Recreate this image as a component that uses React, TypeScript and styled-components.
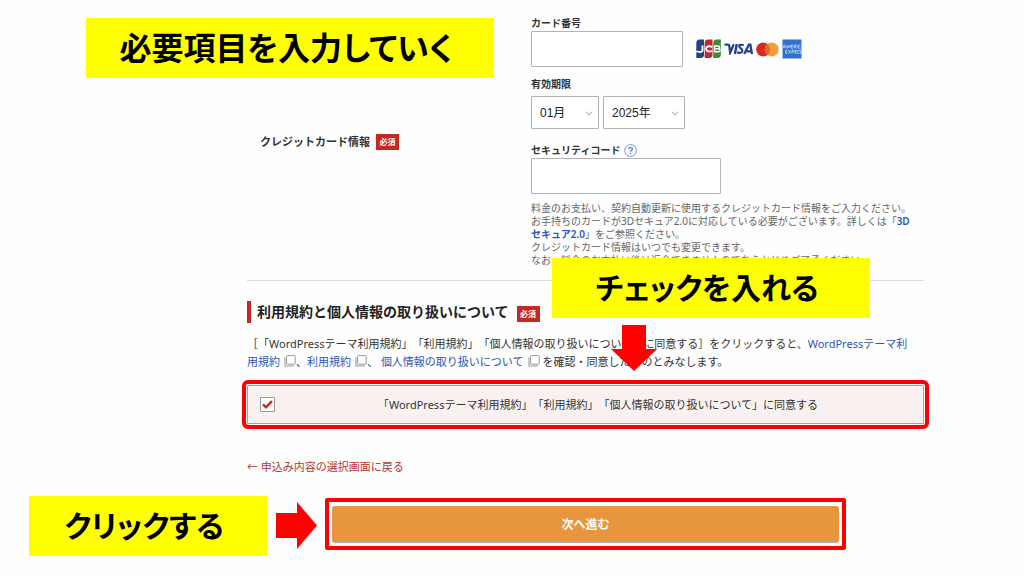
import React from "react";
import styled, { createGlobalStyle } from "styled-components";

const GlobalStyle = createGlobalStyle`
  *, *::before, *::after { box-sizing: border-box; }
  body {
    margin: 0;
    background: #fefefe;
    color: #333;
    font-family: "Noto Sans", "Noto Sans CJK JP", sans-serif;
    font-size: 11px;
    line-height: 18px;
  }
`;

const Page = styled.main`
  position: relative;
  padding: 16px 100px 27px 247px;
`;

const Form = styled.form`
  position: relative;
  display: flex;
  flex-direction: column;
`;

const CardRow = styled.section`
  display: grid;
  grid-template-columns: 271px 1fr;
  align-items: center;
  padding: 0 0 13px 13px;
  border-bottom: 1px solid #ddd;
`;

const RowTitle = styled.h2`
  display: flex;
  align-items: center;
  gap: 6px;
  margin: 0;
  font-size: 11px;
  line-height: 18px;
  font-weight: 700;
`;

const Badge = styled.span`
  display: inline-flex;
  align-items: center;
  justify-content: center;
  width: 23px;
  height: 16px;
  background: #c7281f;
  color: #fff;
  font-size: 8px;
  line-height: 16px;
  font-weight: 700;
`;

const Fields = styled.div`
  display: flex;
  flex-direction: column;
  align-items: flex-start;
`;

const Label = styled.label`
  font-size: 10px;
  line-height: 15px;
  font-weight: 700;
`;

const FieldLine = styled.div<{ $gap: number; $before?: number; $after: number }>`
  display: flex;
  align-items: center;
  gap: ${(p) => p.$gap}px;
  margin-top: ${(p) => p.$before ?? 0}px;
  margin-bottom: ${(p) => p.$after}px;
`;

const TextInput = styled.input<{ $width: number }>`
  width: ${(p) => p.$width}px;
  height: 36px;
  padding: 0 8px;
  border: 1px solid #b3b3b3;
  border-radius: 1px;
  background: #fff;
  font-family: "Liberation Sans", "Noto Sans CJK JP", sans-serif;
  font-size: 12px;
`;

const SelectBox = styled.div<{ $width: number }>`
  position: relative;
  width: ${(p) => p.$width}px;

  svg {
    position: absolute;
    top: 15px;
    right: 6px;
    pointer-events: none;
  }
`;

const Select = styled.select`
  appearance: none;
  width: 100%;
  height: 33px;
  padding: 0 8px;
  border: 1px solid #b3b3b3;
  border-radius: 1px;
  background: #fff;
  color: #222;
  font-family: "Liberation Sans", "Noto Sans CJK JP", sans-serif;
  font-size: 12px;
`;

const Brands = styled.div`
  display: flex;
  align-items: center;
  gap: 3px;
  padding-left: 5px;
`;

const HelpButton = styled.button`
  display: flex;
  padding: 0;
  border: 0;
  background: none;
`;

const Notes = styled.p`
  max-width: 384px;
  margin: 8px 0 0;
  color: #666;
  font-size: 10px;
  line-height: 13px;
`;

const Link = styled.a<{ $strong?: boolean }>`
  color: #2d55c0;
  font-weight: ${(p) => (p.$strong ? 600 : 400)};
  text-decoration: none;
`;

const SectionTitle = styled.h2`
  display: flex;
  align-items: center;
  gap: 8px;
  margin: 20px 0 0;
  padding-left: 6px;
  border-left: 4px solid #c7281f;
  color: #222;
  font-size: 14px;
  line-height: 22px;
  font-weight: 700;

  ${Badge} { margin-top: 4px; }
`;

const Terms = styled.p`
  margin: 12px 0 0;
  padding-right: 13px;
  text-spacing-trim: space-all;

  svg { margin-left: 4px; vertical-align: -1px; }
`;

const AgreeBox = styled.label`
  display: flex;
  align-items: center;
  height: 39px;
  margin-top: 14px;
  padding: 0 2px 0 12px;
  border: 1px solid #cf8f92;
  border-radius: 1px;
  background: #f9f1f0;
  outline: 4px solid #f00;
  outline-offset: 1px;
`;

const AgreeText = styled.span`
  flex: 1;
  text-align: center;
  text-spacing-trim: space-all;
`;

const CheckWrap = styled.span`
  position: relative;
  display: flex;

  svg {
    position: absolute;
    top: 3px;
    left: 2px;
    pointer-events: none;
  }
`;

const Checkbox = styled.input`
  appearance: none;
  width: 15px;
  height: 15px;
  margin: 0;
  border: 1px solid #999;
  border-radius: 1px;
  background: #fff;
`;

const BackLink = styled.a`
  align-self: flex-start;
  margin-top: 34px;
  color: #b9352e;
  text-decoration: none;
`;

const SubmitFrame = styled.div`
  align-self: center;
  width: 77%;
  margin-top: 22px;
  padding: 4px 3px;
  border: 4px solid #f00;
  border-radius: 2px;
`;

const SubmitButton = styled.button`
  display: block;
  width: 100%;
  height: 36px;
  padding: 0;
  border: 0;
  border-radius: 3px;
  background: #e8963e;
  box-shadow: 0 1px 1px #a9a9b4;
  color: #fff;
  font-family: inherit;
  font-size: 12px;
  font-weight: 700;
`;

const Callout = styled.strong<{ $left: number; $top: number; $width: number; $size?: number }>`
  position: absolute;
  left: ${(p) => p.$left}px;
  top: ${(p) => p.$top}px;
  display: flex;
  align-items: center;
  justify-content: center;
  width: ${(p) => p.$width}px;
  height: 60px;
  padding: 0 8px 4px 0;
  background: #ff0;
  color: #000;
  font-family: "Noto Sans CJK JP", sans-serif;
  font-size: ${(p) => p.$size ?? 30}px;
  line-height: 56px;
  font-weight: 700;
  font-feature-settings: "palt";
  white-space: nowrap;
`;

const Arrow = styled.svg<{ $left: number; $top: number }>`
  position: absolute;
  left: ${(p) => p.$left}px;
  top: ${(p) => p.$top}px;
  fill: #f00;
`;

const Chevron = () => (
  <svg width="8" height="5" viewBox="0 0 8 5" fill="none" stroke="#999" aria-hidden="true">
    <path d="M1 .7l3 3.2L7 .7" />
  </svg>
);

const NewWindow = () => (
  <svg width="12" height="12" viewBox="0 0 12 12" fill="none" aria-hidden="true">
    <path d="M1 2.5v8.5h9" stroke="#bbb" strokeWidth="1.6" />
    <rect x="2.6" y=".6" width="8.6" height="8.6" rx=".8" stroke="#999" strokeWidth="1" fill="#fff" />
  </svg>
);

const HelpIcon = () => (
  <svg width="13" height="13" viewBox="0 0 13 13" fill="none" stroke="#4f83cc" aria-hidden="true">
    <circle cx="6.5" cy="6.5" r="5.9" strokeWidth=".8" />
    <path d="M4.7 5.1c0-2.4 3.7-2.3 3.7-.1 0 1.3-1.8 1.4-1.8 2.9" strokeWidth="1.3" />
    <circle cx="6.6" cy="9.6" r=".8" fill="#4f83cc" stroke="none" />
  </svg>
);

const JcbLogo = () => (
  <svg width="25" height="20" viewBox="0 0 25 20" role="img" aria-label="JCB">
    <path d="M3.500.500H8V16q0 3-3.500 3H.300V4Q.300.500 3.500.500z" fill="#1c4489" />
    <path d="M12 .500h4.500V16q0 3-3.500 3H8.700V4Q8.700.500 12 .500z" fill="#c2272d" />
    <path d="M20.500.500H24.800V16q0 3-3.500 3H17.200V4Q17.200.500 20.500.500z" fill="#3f8a37" />
    <g fill="none" stroke="#fff" strokeWidth="1.900">
      <path d="M6.500 6.500v4.800q0 1.700-2.700 1.700Q1.700 13 .300 12.200" />
      <path d="M16.300 7.800q-6.200-1.600-6.200 2t6.200 2.300" />
      <path d="M18 7h4q1.600 0 1.600 1.300T22 9.800h-4M22 9.800q2 0 2 1.600T22 12.800h-4M18.600 6.500v6.500" strokeWidth="1.400" />
    </g>
  </svg>
);

const VisaLogo = () => (
  <svg width="29" height="12" viewBox="0 0 29 12" role="img" aria-label="VISA">
    <g fill="none" stroke="#23418f">
      <path d="M.5 1.600h3.500q1 0 1.200 1L6.200 9.500 9.800 1.300" strokeWidth="2.300" />
      <path d="M12.800 1l-1.900 10" strokeWidth="2.400" />
      <path d="M19.700 2.200q-4.600-1.300-4.600 1.100c0 1.700 3.600 2.200 3.200 4.500-.3 2.300-3.200 2.500-5.300 1.500" strokeWidth="2.200" />
      <path d="M20.200 11l4.700-9.300h1.500L28 11M22.500 8.300h5" strokeWidth="2.200" />
    </g>
  </svg>
);

const MastercardLogo = () => (
  <svg width="23" height="15" viewBox="0 0 23 15" role="img" aria-label="Mastercard">
    <circle cx="7.200" cy="7.500" r="7" fill="#d8291f" />
    <circle cx="15.700" cy="7.500" r="7" fill="#eb9f3c" />
    <path d="M11.450 1.950a7 7 0 0 1 0 11.100a7 7 0 0 1 0-11.100z" fill="#e8652a" />
  </svg>
);

const AmexLogo = () => (
  <svg width="20" height="20" viewBox="0 0 20 20" role="img" aria-label="American Express">
    <path d="M.500.500h19v19H.500z" fill="#2f72cb" />
    <g fill="none" stroke="#c3d9f4" strokeWidth=".8">
      <path d="M.8 9.300l1.600-3.500 1.600 3.500M1.500 8.200h1.900M5 9.300V6l1.500 2.600L8 6v3.300M11 6H9.300v3.200H11M9.300 7.600h1.500M12.200 9.300V6h1.500v1.500h-1.500l1.700 1.800M15.100 5.700v3.600M18.700 6h-2v3.200h2" />
      <path d="M5.400 11.200H3.800v3.300h1.600M3.800 12.900h1.400M6.300 11l2.600 3.600M8.900 11l-2.600 3.600M10 14.700v-3.500h1.700v1.700H10M13 14.700v-3.500h1.500l-1.300 1.900 1.500 1.600M17 11.200h-1.300v3.300H17M19.200 11.200h-1.400v1.600h1.300v1.700h-1.500" />
    </g>
  </svg>
);

export default function App() {
  return (
    <>
      <GlobalStyle />
      <Page>
        <Form onSubmit={(e: React.FormEvent) => e.preventDefault()}>
          <CardRow>
            <RowTitle>
              クレジットカード情報<Badge>必須</Badge>
            </RowTitle>
            <Fields>
              <Label htmlFor="card-number">カード番号</Label>
              <FieldLine $gap={8} $after={10}>
                <TextInput id="card-number" $width={152} inputMode="numeric" />
                <Brands>
                  <JcbLogo />
                  <VisaLogo />
                  <MastercardLogo />
                  <AmexLogo />
                </Brands>
              </FieldLine>
              <Label htmlFor="expiry-month">有効期限</Label>
              <FieldLine $gap={4} $before={4} $after={14}>
                <SelectBox $width={68}>
                  <Select id="expiry-month" defaultValue="01">
                    <option value="01">01月</option>
                  </Select>
                  <Chevron />
                </SelectBox>
                <SelectBox $width={82}>
                  <Select aria-label="有効期限（年）" defaultValue="2025">
                    <option value="2025">2025年</option>
                  </Select>
                  <Chevron />
                </SelectBox>
              </FieldLine>
              <FieldLine $gap={4} $after={0}>
                <Label htmlFor="security-code">セキュリティコード</Label>
                <HelpButton type="button" aria-label="セキュリティコードについて">
                  <HelpIcon />
                </HelpButton>
              </FieldLine>
              <TextInput id="security-code" $width={190} inputMode="numeric" />
              <Notes>
                料金のお支払い、契約自動更新に使用するクレジットカード情報をご入力ください。
                <br />
                お手持ちのカードが3Dセキュア2.0に対応している必要がございます。詳しくは「
                <Link href="#secure" $strong>3Dセキュア2.0</Link>」をご参照ください。
                <br />
                クレジットカード情報はいつでも変更できます。
                <br />
                なお、料金のお支払い後は返金できませんのであらかじめご了承ください。
              </Notes>
            </Fields>
          </CardRow>

          <SectionTitle>
            利用規約と個人情報の取り扱いについて<Badge>必須</Badge>
          </SectionTitle>
          <Terms>
            ［「WordPressテーマ利用規約」「利用規約」「個人情報の取り扱いについて」に同意する］をクリックすると、
            <Link href="#theme-terms">WordPressテーマ利用規約<NewWindow /></Link>、
            <Link href="#terms">利用規約<NewWindow /></Link>、{" "}
            <Link href="#privacy">個人情報の取り扱いについて<NewWindow /></Link>{" "}
            を確認・同意したものとみなします。
          </Terms>
          <AgreeBox>
            <CheckWrap>
              <Checkbox type="checkbox" defaultChecked />
              <svg width="11" height="9" viewBox="0 0 11 9" fill="none" stroke="#c7281f" strokeWidth="2.400" aria-hidden="true">
                <path d="M1 4.300l3 3L10 1.200" />
              </svg>
            </CheckWrap>
            <AgreeText>
              「WordPressテーマ利用規約」「利用規約」「個人情報の取り扱いについて」に同意する
            </AgreeText>
          </AgreeBox>

          <BackLink href="#back">← 申込み内容の選択画面に戻る</BackLink>
          <SubmitFrame>
            <SubmitButton type="submit">次へ進む</SubmitButton>
          </SubmitFrame>
        </Form>

        <Callout $left={86} $top={18} $width={408} $size={32}>必要項目を入力していく</Callout>
        <Callout $left={552} $top={258} $width={318}>チェックを入れる</Callout>
        <Arrow $left={611} $top={325} width="46" height="46" viewBox="0 0 46 46" aria-hidden="true">
          <path d="M11 0h24v24h11L23 46 0 24h11z" />
        </Arrow>
        <Callout $left={29} $top={496} $width={238}>クリックする</Callout>
        <Arrow $left={276} $top={502} width="41" height="47" viewBox="0 0 41 47" aria-hidden="true">
          <path d="M0 11h21V0l20 23.500L21 47V36H0z" />
        </Arrow>
      </Page>
    </>
  );
}
